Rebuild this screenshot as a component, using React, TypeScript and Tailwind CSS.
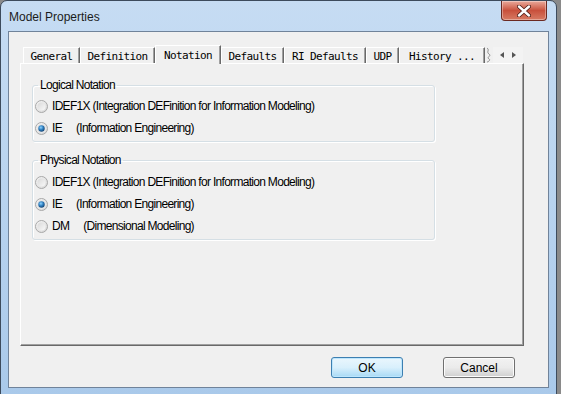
import React from "react"

const tabs = [
  { label: "General", w: "w-[57px]" },
  { label: "Definition", w: "w-[75px]" },
  { label: "Notation", w: "w-[66px]", active: true },
  { label: "Defaults", w: "w-[63px]" },
  { label: "RI Defaults", w: "w-[82px]" },
  { label: "UDP", w: "w-[33px]" },
  { label: "History ...", w: "w-[86px]" },
]

function Radio({ checked }: { checked?: boolean }) {
  return (
    <svg width="13" height="13" viewBox="0 0 13 13" className="shrink-0">
      <defs>
        <linearGradient id="rbg" x1="0" y1="0" x2="1" y2="1">
          <stop offset="0" stopColor="#f6f6f6" />
          <stop offset="1" stopColor="#d6d6d6" />
        </linearGradient>
        <linearGradient id="rin" x1="0" y1="0" x2="1" y2="1">
          <stop offset="0" stopColor="#d9d9d9" />
          <stop offset="1" stopColor="#f9f9f9" />
        </linearGradient>
        <radialGradient id="rdot" cx="0.4" cy="0.35" r="0.7">
          <stop offset="0" stopColor="#8fd4ff" />
          <stop offset="0.5" stopColor="#2f7fc0" />
          <stop offset="1" stopColor="#123e6a" />
        </radialGradient>
      </defs>
      <circle cx="6.5" cy="6.5" r="6" fill="url(#rbg)" stroke="#a8a8a8" />
      <circle cx="6.5" cy="6.5" r="4" fill="url(#rin)" />
      {checked && <circle cx="6.5" cy="6.5" r="3.2" fill="url(#rdot)" />}
    </svg>
  )
}

function Option({ code, text, checked }: { code?: string; text: string; checked?: boolean }) {
  return (
    <div className="flex h-[22px] items-center gap-[4px] pl-[2px]">
      <Radio checked={checked} />
      <span>
        {code && <span className="mr-[14px]">{code}</span>}
        {text}
      </span>
    </div>
  )
}

function Group({ title, children }: { title: string; children: React.ReactNode }) {
  return (
    <fieldset className="w-[403px] rounded-[3px] border border-[#d5dfe5] px-0 pt-[3px] pb-[2px] shadow-[inset_1px_1px_0_#fff,1px_1px_0_#fff]">
      <legend className="ml-[5px] px-[2px] leading-[13px]">{title}</legend>
      {children}
    </fieldset>
  )
}

export default function App() {
  return (
    <div className="h-[394px] w-[561px] overflow-hidden bg-[#8a8a8a] font-['Liberation_Sans',sans-serif] text-[12px] tracking-[-0.7px] text-black">
      <div className="flex h-[402px] w-[557px] flex-col rounded-t-[7px] border border-[#3d4b5c] bg-gradient-to-b from-[#c6dcf3] via-[#b8d3ef] to-[#a9c9ea] px-[7px]">
        {/* title bar */}
        <div className="flex h-[30px] shrink-0 items-start justify-between">
          <span className="pt-[7px] pl-[1px] text-[12px] tracking-normal text-[#1b1b1b]">
            Model Properties
          </span>
          <div className="mr-[2px] flex h-[20px] w-[46px] items-center justify-center rounded-b-[4px] border border-t-0 border-[#6b2a22] bg-gradient-to-b from-[#e9a99b] via-[#c8503c] to-[#d77a63] shadow-[inset_0_0_0_1px_rgba(255,255,255,0.35)]">
            <svg width="14" height="12" viewBox="0 0 14 12">
              <path d="M2 1.5 L12 10.5 M12 1.5 L2 10.5" stroke="#4a1a14" strokeWidth="4" strokeLinecap="round" />
              <path d="M2 1.5 L12 10.5 M12 1.5 L2 10.5" stroke="#fff" strokeWidth="2.4" strokeLinecap="round" />
            </svg>
          </div>
        </div>

        {/* client */}
        <div className="h-[357px] shrink-0 border border-[#70839a] bg-[#f0f0f0] pt-[13px] pl-[11px]">
          {/* tab strip */}
          <div className="ml-[3px] flex h-[18px] items-end font-['DejaVu_Sans_Mono',monospace] text-[11px] tracking-[-0.6px]">
            {tabs.map((t) =>
              t.active ? (
                <div
                  key={t.label}
                  className={`${t.w} relative z-10 -mb-px flex h-[19px] items-start justify-center border-t border-l border-r border-t-white border-l-white border-r-[#696969] bg-[#f0f0f0] pt-[2px] shadow-[inset_-1px_0_0_#a0a0a0]`}
                >
                  {t.label}
                </div>
              ) : (
                <div
                  key={t.label}
                  className={`${t.w} flex h-[16px] items-start justify-center border-t border-l border-r border-t-white border-l-white border-r-[#696969] bg-[#f0f0f0] pt-[1px] shadow-[inset_-1px_0_0_#a0a0a0]`}
                >
                  {t.label}
                </div>
              )
            )}
            <svg width="8" height="16" viewBox="0 0 8 16" className="shrink-0">
              <path d="M2 1 C5 3 1 5 4 7 C7 9 1 10 4 12 C6 13 3 15 2 15" fill="none" stroke="#8a8a8a" />
            </svg>
            <div className="flex h-[16px] w-[30px] items-center justify-around bg-[#f3f3f3] px-[3px]">
              <svg width="4" height="6" viewBox="0 0 4 6">
                <path d="M4 0 L0 3 L4 6 Z" fill="#555" />
              </svg>
              <svg width="4" height="6" viewBox="0 0 4 6">
                <path d="M0 0 L4 3 L0 6 Z" fill="#555" />
              </svg>
            </div>
          </div>

          {/* tab page */}
          <div className="h-[283px] w-[504px] border-t border-l border-t-white border-l-white border-r border-b border-r-[#696969] border-b-[#696969] pl-[11px] pt-[15px] shadow-[inset_-1px_-1px_0_#a0a0a0]">
            <Group title="Logical Notation">
              <Option text="IDEF1X (Integration DEFinition for Information Modeling)" />
              <Option code="IE" text="(Information Engineering)" checked />
            </Group>
            <div className="h-[12px]" />
            <Group title="Physical Notation">
              <div className="pt-[1px]" />
              <Option text="IDEF1X (Integration DEFinition for Information Modeling)" />
              <Option code="IE" text="(Information Engineering)" checked />
              <Option code="DM" text="(Dimensional Modeling)" />
            </Group>
          </div>

          {/* buttons */}
          <div className="flex w-[504px] justify-end gap-[40px] pt-[11px] pr-[9px] text-[12px] tracking-normal">
            <button className="h-[21px] w-[72px] rounded-[3px] border border-[#3c7fb1] bg-gradient-to-b from-[#eaf6fd] via-[#d9f0fc] to-[#a7d9f5] shadow-[inset_0_0_0_1px_#bde6fd]">
              OK
            </button>
            <button className="h-[21px] w-[72px] rounded-[3px] border border-[#707070] bg-gradient-to-b from-[#f2f2f2] via-[#ebebeb] to-[#cfcfcf] shadow-[inset_0_0_0_1px_#fcfcfc]">
              Cancel
            </button>
          </div>
        </div>
      </div>
    </div>
  )
}
